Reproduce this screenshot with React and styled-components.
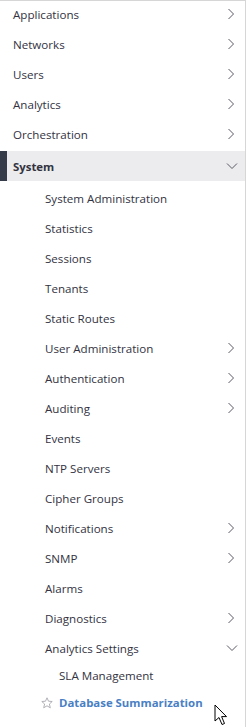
import React from "react";
import styled, { createGlobalStyle } from "styled-components";

const GlobalStyle = createGlobalStyle`
  html, body {
    margin: 0;
    padding: 0;
    background: #ffffff;
  }
  body {
    font-family: "Open Sans", "Noto Sans", sans-serif;
  }
`;

const Sidebar = styled.nav`
  position: relative;
  width: 246px;
  height: 727px;
  border-top: 1px solid #d6d6d6;
  border-right: 1px solid #d6d6d6;
  box-sizing: border-box;
  overflow: hidden;
`;

const List = styled.ul`
  list-style: none;
  margin: ${(p) => p.$margin || "0"};
  padding: 0;
`;

const Row = styled.li`
  display: flex;
  align-items: center;
  height: ${(p) => p.$height || 30}px;
  padding-left: ${(p) => p.$indent || 13}px;
  padding-right: 6px;
  font-size: ${(p) => (p.$bold ? "11.4px" : "11.6px")};
  color: #33333f;
  font-weight: ${(p) => (p.$bold ? 700 : 400)};
  background: ${(p) => (p.$active ? "#ececee" : "transparent")};
  box-shadow: ${(p) => (p.$active ? "inset 7px 0 0 #353b48" : "none")};
  box-sizing: border-box;
`;

const Label = styled.span`
  flex: 1;
  white-space: nowrap;
  color: ${(p) => p.$color || "inherit"};
`;

const Chevron = ({ down }) =>
  down ? (
    <svg width="12" height="8" viewBox="0 0 12 8">
      <polyline points="1,1.5 6,6.5 11,1.5" fill="none" stroke="#5a5a66" strokeWidth="1" />
    </svg>
  ) : (
    <svg width="8" height="12" viewBox="0 0 8 12">
      <polyline points="1.5,1 6.5,6 1.5,11" fill="none" stroke="#5a5a66" strokeWidth="1" />
    </svg>
  );

const ChevronSlot = styled.span`
  display: flex;
  width: 12px;
  justify-content: center;
  margin-right: ${(p) => (p.$down ? "1px" : "2px")};
`;

const Star = styled.svg`
  margin-right: 6px;
  flex: none;
`;

const Cursor = styled.svg`
  position: absolute;
  left: 214px;
  top: 703px;
`;

const topItems = ["Applications", "Networks", "Users", "Analytics", "Orchestration"];

const systemItems = [
  ["System Administration", false],
  ["Statistics", false],
  ["Sessions", false],
  ["Tenants", false],
  ["Static Routes", false],
  ["User Administration", true],
  ["Authentication", true],
  ["Auditing", true],
  ["Events", false],
  ["NTP Servers", false],
  ["Cipher Groups", false],
  ["Notifications", true],
  ["SNMP", true],
  ["Alarms", false],
  ["Diagnostics", true],
];

const Item = ({ label, arrow, indent, height }) => (
  <Row $indent={indent} $height={height}>
    <Label>{label}</Label>
    {arrow && (
      <ChevronSlot $down={arrow === "down"}>
        <Chevron down={arrow === "down"} />
      </ChevronSlot>
    )}
  </Row>
);

export default function App() {
  return (
    <>
      <GlobalStyle />
      <Sidebar>
        <List $margin="-2px 0 0">
          {topItems.map((t) => (
            <Item key={t} label={t} arrow="right" />
          ))}
        </List>
        <List $margin="2px 0 0">
          <Row $active $bold>
            <Label>System</Label>
            <ChevronSlot $down>
              <Chevron down />
            </ChevronSlot>
          </Row>
        </List>
        <List $margin="2px 0 0">
          {systemItems.map(([t, a]) => (
            <Item key={t} label={t} arrow={a ? "right" : null} indent={45} />
          ))}
          <Item label="Analytics Settings" arrow="down" indent={45} />
          <Item label="SLA Management" indent={59} height={24} />
          <Row $indent={41} $height={31} $bold>
            <Star width="12" height="12" viewBox="0 0 12 12">
              <polygon
                points="6,0.8 7.5,4.2 11.2,4.5 8.4,7 9.3,10.8 6,8.8 2.7,10.8 3.6,7 0.8,4.5 4.5,4.2"
                fill="none"
                stroke="#a8a8b0"
                strokeWidth="0.9"
              />
            </Star>
            <Label $color="#4a7fc4">Database Summarization</Label>
          </Row>
        </List>
        <Cursor width="14" height="22" viewBox="0 0 14 22">
          <path
            d="M1 1 L1 17 L5 13.5 L8 20.5 L10.5 19.5 L7.6 12.6 L12.5 12.6 Z"
            fill="#ffffff"
            stroke="#000000"
            strokeWidth="1"
            strokeLinejoin="round"
          />
        </Cursor>
      </Sidebar>
    </>
  );
}
